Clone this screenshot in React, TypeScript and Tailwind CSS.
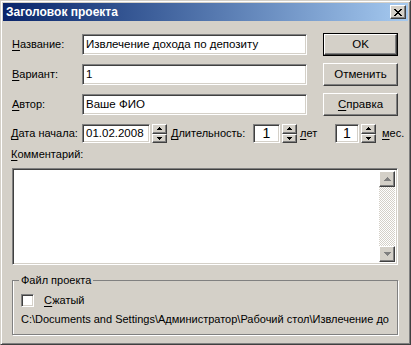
import React from 'react';

const raised =
  'border border-t-white border-l-white border-r-[#404040] border-b-[#404040] shadow-[inset_-1px_-1px_#808080] bg-[#d4d0c8]';
const sunken =
  'border border-t-[#808080] border-l-[#808080] border-r-white border-b-white shadow-[inset_1px_1px_#404040,inset_-1px_-1px_#d4d0c8] bg-white';

function Key({ children }: { children: React.ReactNode }) {
  return <span className="underline underline-offset-[2px]">{children}</span>;
}

function Arrow({ up, color = '#000', w = 5 }: { up?: boolean; color?: string; w?: number }) {
  const h = Math.ceil(w / 2);
  return (
    <svg width={w} height={h} viewBox={`0 0 ${w} ${h}`} className="block">
      <polygon
        points={up ? `0,${h} ${w},${h} ${w / 2},0` : `0,0 ${w},0 ${w / 2},${h}`}
        fill={color}
        shapeRendering="crispEdges"
      />
    </svg>
  );
}

function Spinner() {
  return (
    <div className="flex flex-col w-[15px] h-full ml-[2px]">
      <div className={`${raised} flex-1 flex items-center justify-center`}>
        <Arrow up />
      </div>
      <div className={`${raised} flex-1 flex items-center justify-center`}>
        <Arrow />
      </div>
    </div>
  );
}

function Field({ label, k, value }: { label: string; k: string; value: string }) {
  return (
    <div className="flex items-center h-[21px]">
      <span className="w-[70px]">
        <Key>{k}</Key>
        {label}
      </span>
      <div className={`${sunken} w-[225px] h-full flex items-center pl-[3px] text-[11.5px]`}>{value}</div>
    </div>
  );
}

function Button({ children, def }: { children: React.ReactNode; def?: boolean }) {
  const inner = (
    <div className={`${raised} w-full h-full flex items-center justify-center text-[11.5px]`}>{children}</div>
  );
  return def ? (
    <div className="w-[75px] h-[23px] border border-black">{inner}</div>
  ) : (
    <div className="w-[75px] h-[23px]">{inner}</div>
  );
}

export default function App() {
  return (
    <div className="w-[411px] h-[345px] bg-[#d4d0c8] font-['Liberation_Sans',sans-serif] text-[11px] text-black border border-t-[#d4d0c8] border-l-[#d4d0c8] border-r-[#404040] border-b-[#404040] shadow-[inset_1px_1px_white,inset_-1px_-1px_#808080] p-[2px] flex flex-col">
      {/* Title bar */}
      <div className="h-[18px] flex items-center justify-between bg-linear-to-r from-[#0a246a] to-[#a6caf0] pl-[3px] pr-[2px]">
        <span className="font-bold text-white text-[12px]">Заголовок проекта</span>
        <div className={`${raised} w-[16px] h-[14px] flex items-center justify-center`}>
          <svg width="8" height="7" viewBox="0 0 8 7" className="block" shapeRendering="crispEdges">
            <path d="M0 0h2v1h-2zM6 0h2v1h-2zM1 1h2v1h-2zM5 1h2v1h-2zM2 2h4v1h-4zM3 3h2v1h-2zM2 4h4v1h-4zM1 5h2v1h-2zM5 5h2v1h-2zM0 6h2v1h-2zM6 6h2v1h-2z" fill="#000" />
          </svg>
        </div>
      </div>

      <div className="flex flex-col pl-[9px]">
        {/* Fields and buttons */}
        <div className="flex pt-[12px]">
          <div className="flex flex-col gap-[9px] pt-[1px]">
            <Field k="Н" label="азвание:" value="Извлечение дохода по депозиту" />
            <Field k="В" label="ариант:" value="1" />
            <Field k="А" label="втор:" value="Ваше ФИО" />
          </div>
          <div className="ml-[16px] flex flex-col gap-[7px]">
            <Button def>OK</Button>
            <Button>Отменить</Button>
            <Button>
              <Key>С</Key>правка
            </Button>
          </div>
        </div>

        {/* Date / duration */}
        <div className="flex items-center h-[19px] mt-[8px]">
          <span className="w-[70px] -ml-[1px] mr-[1px]">
            <Key>Д</Key>ата начала:
          </span>
          <div className={`${sunken} w-[68px] h-full flex items-center pl-[3px] text-[11.5px]`}>01.02.2008</div>
          <Spinner />
          <span className="ml-[4px] w-[82px]">
            <Key>Д</Key>лительность:
          </span>
          <div className={`${sunken} w-[27px] h-full flex items-center justify-center text-[14px]`}>1</div>
          <Spinner />
          <span className="ml-[3px] w-[35px]">
            <Key>л</Key>ет
          </span>
          <div className={`${sunken} w-[24px] h-full flex items-center justify-center text-[14px]`}>1</div>
          <Spinner />
          <span className="ml-[6px]">
            <Key>м</Key>ес.
          </span>
        </div>

        {/* Comment */}
        <div className="mt-[5px] -ml-[1px] leading-[13px]">
          <Key>К</Key>омментарий:
        </div>
        <div className={`${sunken} mt-[7px] w-[386px] h-[97px] flex justify-end p-[2px]`}>
          <div className="w-[16px] h-full flex flex-col bg-[repeating-conic-gradient(#ffffff_0_25%,#d4d0c8_0_50%)] bg-[length:2px_2px]">
            <div className={`${raised} h-[16px] flex items-center justify-center`}>
              <Arrow up color="#808080" w={7} />
            </div>
            <div className="flex-1" />
            <div className={`${raised} h-[16px] flex items-center justify-center`}>
              <Arrow color="#808080" w={7} />
            </div>
          </div>
        </div>

        {/* Project file group */}
        <fieldset className="mt-[9px] w-[386px] h-[61px] border border-[#808080] shadow-[inset_1px_0_white,1px_1px_white] px-[8px]">
          <legend className="px-[2px] -ml-[2px] leading-[13px]">Файл проекта</legend>
          <div className="flex items-center mt-[7px] h-[13px]">
            <div className={`${sunken} w-[13px] h-[13px]`} />
            <span className="ml-[10px]">
              <Key>С</Key>жатый
            </span>
          </div>
          <div className="mt-[6px] leading-[13px] whitespace-nowrap">
            C:\Documents and Settings\Администратор\Рабочий стол\Извлечение до
          </div>
        </fieldset>
      </div>
    </div>
  );
}
